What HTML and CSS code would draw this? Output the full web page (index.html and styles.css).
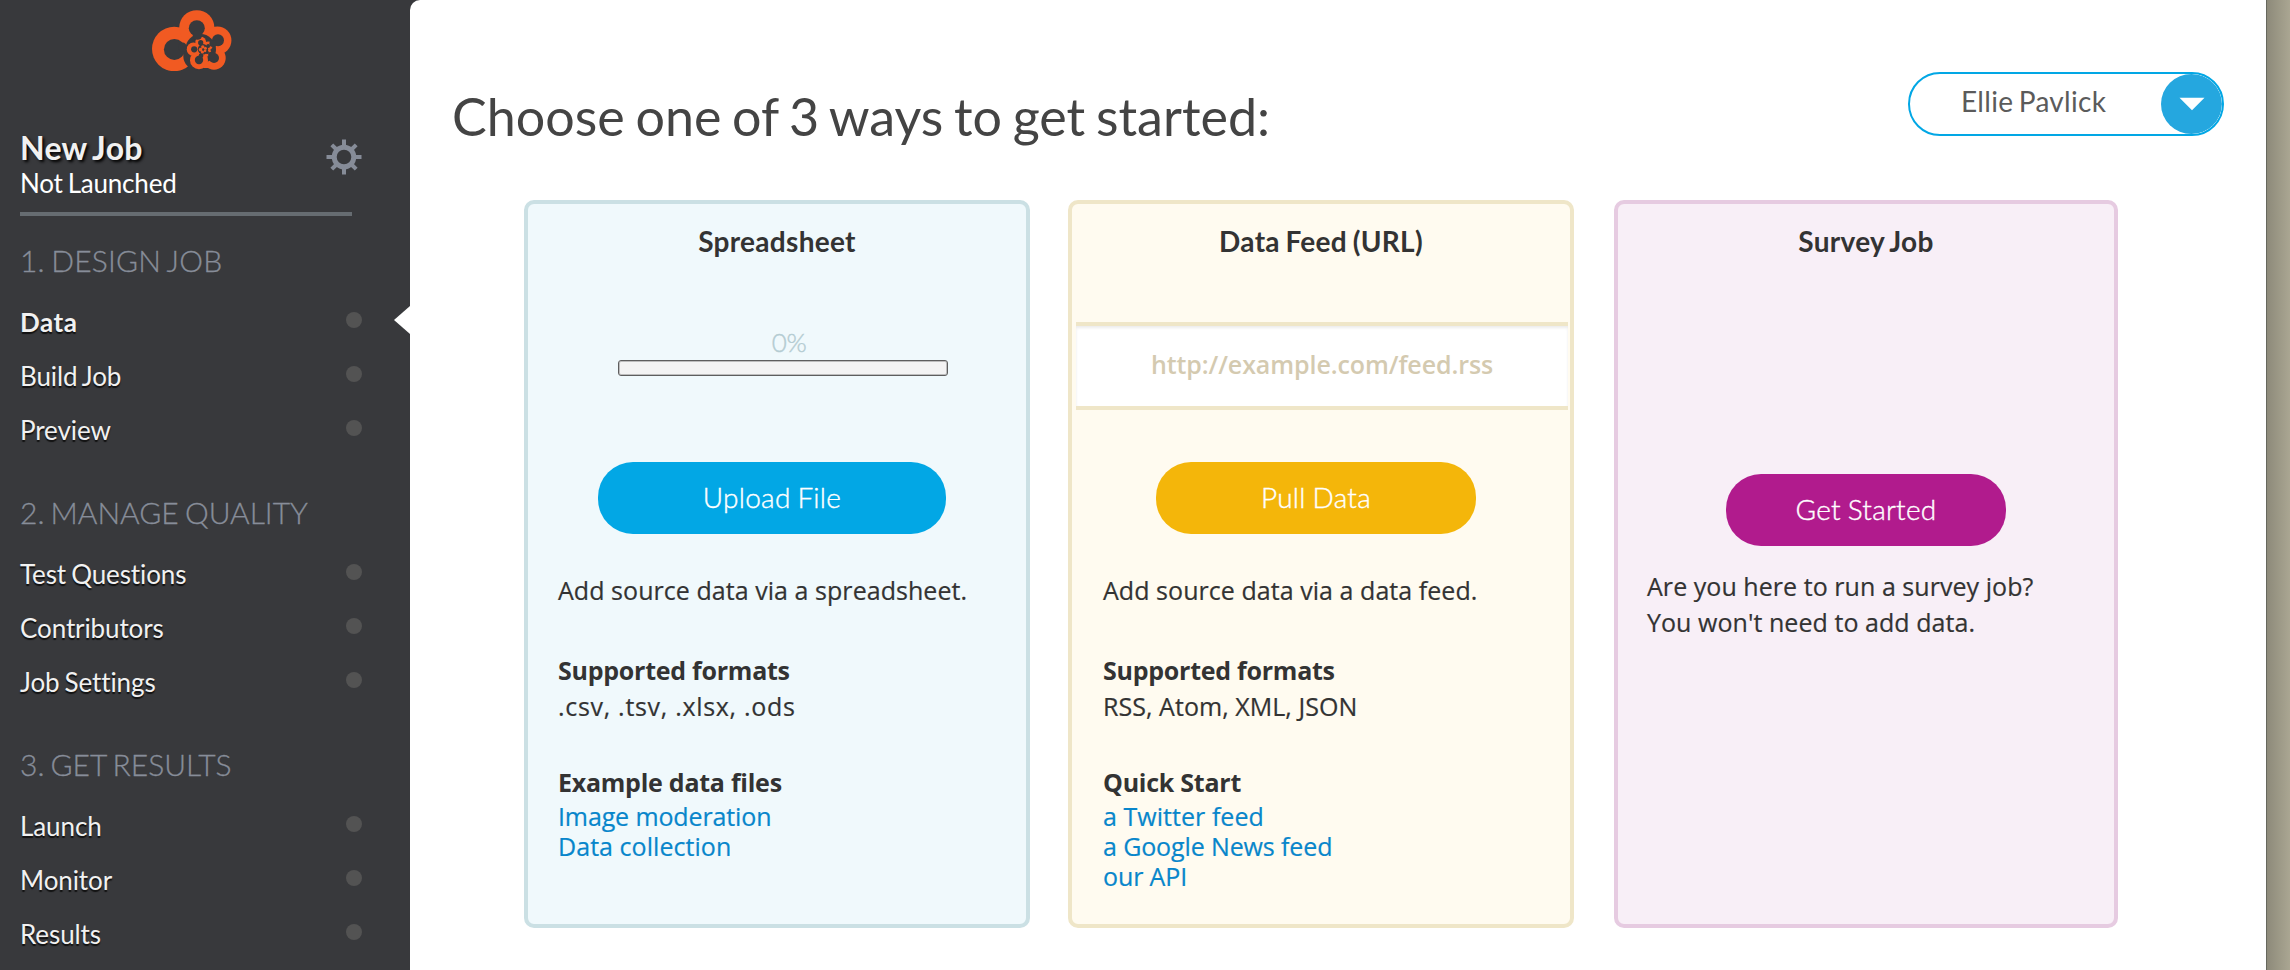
FILE: index.html
```html
<!DOCTYPE html>
<html lang="en">
<head>
<meta charset="utf-8">
<title>New Job</title>
<link rel="stylesheet" href="styles.css">
</head>
<body>
<div class="app">
  <aside class="sidebar">
    <svg class="logo" viewBox="0 0 82 64" aria-hidden="true">
      <g class="petal">
        <circle cx="23.2" cy="42" r="22.2"/><circle cx="45.8" cy="20.8" r="17.6"/><circle cx="66.4" cy="33.5" r="14"/><circle cx="50" cy="40" r="16"/>
      </g>
      <g class="gap">
        <circle cx="49.5" cy="42" r="15"/><circle cx="46.5" cy="49" r="14.2"/>
      </g>
      <circle class="petal" cx="63" cy="51" r="11.7"/>
      <circle class="gap" cx="52" cy="42.5" r="13"/>
      <g class="petal">
        <circle cx="48" cy="53.2" r="9"/><circle cx="42.4" cy="42.2" r="6.7"/><circle cx="49.7" cy="35" r="5.4"/><circle cx="57.2" cy="38.8" r="4.4"/><circle cx="56.4" cy="45.6" r="3.8"/><circle cx="51.5" cy="42" r="7"/>
        <path d="M52 61h8l-3-7z"/>
      </g>
      <g class="gap">
        <circle cx="23.4" cy="42.4" r="10.5"/><circle cx="31.5" cy="40" r="4.4"/>
        <circle cx="45.8" cy="21.2" r="8"/><circle cx="46.5" cy="28" r="4.8"/>
        <circle cx="67" cy="33.2" r="6"/><circle cx="62" cy="36.5" r="3.6"/>
        <circle cx="63" cy="51" r="5"/><circle cx="60.3" cy="48" r="3.2"/>
        <circle cx="48" cy="53" r="4.2"/><circle cx="50" cy="48.8" r="2.4"/>
        <circle cx="43.2" cy="42.3" r="3.1"/><circle cx="49.7" cy="35.7" r="2.6"/>
        <circle cx="57.2" cy="39" r="1.9"/><circle cx="56.2" cy="45.4" r="1.7"/>
        <circle cx="52" cy="42.2" r="5.2"/>
      </g>
      <g class="petal">
        <circle cx="49.7" cy="42.6" r="1.9"/><circle cx="51.8" cy="40" r="1.7"/><circle cx="54.4" cy="41.2" r="1.5"/><circle cx="54" cy="43.8" r="1.4"/><circle cx="51.4" cy="45" r="1.6"/>
      </g>
      <circle class="gap" cx="52.2" cy="42.5" r="1"/>
    </svg>
    <div class="job">
      <div>
        <div class="job-name">New Job</div>
        <div class="job-status">Not Launched</div>
      </div>
      <svg class="gear" viewBox="-18 -18 36 36" aria-hidden="true">
        <circle r="9.8" fill="none" stroke-width="5"/>
        <path d="M0-17.5V-11M0 17.5V11M-17.5 0H-11M17.5 0H11M-12.2-12.2-8-8M12.2 12.2 8 8M-12.2 12.2-8 8M12.2-12.2 8-8" stroke-width="4"/>
      </svg>
    </div>
    <h2 class="step">1. DESIGN JOB</h2>
    <ul class="nav">
      <li class="item active">Data<span class="dot"></span></li>
      <li class="item">Build Job<span class="dot"></span></li>
      <li class="item">Preview<span class="dot"></span></li>
    </ul>
    <h2 class="step step-2">2. MANAGE QUALITY</h2>
    <ul class="nav">
      <li class="item">Test Questions<span class="dot"></span></li>
      <li class="item">Contributors<span class="dot"></span></li>
      <li class="item">Job Settings<span class="dot"></span></li>
    </ul>
    <h2 class="step step-2">3. GET RESULTS</h2>
    <ul class="nav">
      <li class="item">Launch<span class="dot"></span></li>
      <li class="item">Monitor<span class="dot"></span></li>
      <li class="item">Results<span class="dot"></span></li>
    </ul>
  </aside>
  <main class="main">
    <header class="top">
      <h1 class="title">Choose one of 3 ways to get started:</h1>
      <div class="user">
        <span class="user-name">Ellie Pavlick</span>
        <span class="user-toggle"><svg class="arrow" viewBox="0 0 26 14" aria-hidden="true"><path d="M0.5 0.8H25.5L13 13.2z"/></svg></span>
      </div>
    </header>
    <div class="cards">
      <section class="card sheet">
        <h3 class="card-title">Spreadsheet</h3>
        <div class="slot">
          <div class="percent">0%</div>
          <div class="bar"></div>
        </div>
        <div class="btn">Upload File</div>
        <div class="info">
          <p class="line">Add source data via a spreadsheet.</p>
          <p class="line label gap-lg">Supported formats</p>
          <p class="line formats">.csv, .tsv, .xlsx, .ods</p>
          <p class="line label gap-md">Example data files</p>
          <div class="links"><a class="link snug">Image moderation</a><a class="link">Data collection</a></div>
        </div>
      </section>
      <section class="card feed">
        <h3 class="card-title">Data Feed (URL)</h3>
        <div class="slot">
          <div class="url">http://example.com/feed.rss</div>
        </div>
        <div class="btn">Pull Data</div>
        <div class="info">
          <p class="line">Add source data via a data feed.</p>
          <p class="line label gap-lg">Supported formats</p>
          <p class="line">RSS, Atom, XML, JSON</p>
          <p class="line label gap-md">Quick Start</p>
          <div class="links"><a class="link">a Twitter feed</a><a class="link snug">a Google News feed</a><a class="link snug">our API</a></div>
        </div>
      </section>
      <section class="card survey">
        <h3 class="card-title">Survey Job</h3>
        <div class="slot"></div>
        <div class="btn">Get Started</div>
        <div class="info">
          <p class="line">Are you here to run a survey job?</p>
          <p class="line">You won't need to add data.</p>
        </div>
      </section>
    </div>
  </main>
  <div class="edge"></div>
</div>
</body>
</html>
```
FILE: styles.css
```css
* { box-sizing: border-box; margin: 0; padding: 0; }
body { background: #38393c; font-family: Lato, sans-serif; overflow: hidden; }
.app { display: flex; height: 970px; width: 2290px; }

.sidebar { width: 410px; flex: none; padding: 7px 0 0 20px; color: #f1f1f1; }
.logo { display: block; width: 82px; height: 64px; margin-left: 131px; }
.petal { fill: #f15a22; }
.gap { fill: #38393c; }
.job { display: flex; justify-content: space-between; width: 342px; height: 145px; margin-bottom: 26px; padding-top: 58px; position: relative; }
.job::after { content: ""; position: absolute; left: 0; bottom: 0; width: 332px; height: 4px; background: #666c71; }
.job-name { font-size: 32px; font-weight: 700; line-height: 38px; letter-spacing: 0.3px; word-spacing: -2px; text-shadow: 2px 2px 3px #000; }
.job-status { font-size: 26px; font-weight: 400; line-height: 32px; letter-spacing: -0.2px; word-spacing: -1.5px; color: #fff; }
.gear { width: 36px; height: 36px; margin-top: 10px; fill: none; stroke: #868c98; }
.step { font-size: 30px; font-weight: 300; line-height: 36px; color: #878d99; margin-bottom: 17px; word-spacing: -2px; letter-spacing: 0.2px; -webkit-text-stroke: 0.3px #878d99; }
.step-2 { margin-top: 37px; letter-spacing: 0; }
.nav { list-style: none; }
.item { display: flex; align-items: center; justify-content: space-between; position: relative; width: 342px; height: 54px; line-height: 54px; font-size: 26px; word-spacing: -1.5px; letter-spacing: -0.1px; text-shadow: 0 2px 1px #111; }
.active { font-weight: 700; letter-spacing: 0.5px; }
.active::after { content: ""; position: absolute; left: 374px; top: 11px; border: solid transparent; border-width: 14px 16px 14px 0; border-right-color: #fff; }
.dot { width: 16px; height: 16px; border-radius: 50%; background: #535353; margin-bottom: 4px; }

.main { width: 1856px; flex: none; background: #fff; border-top-left-radius: 10px; padding-top: 72px; }
.edge { flex: 1; border-left: 1px solid #66675d; background: linear-gradient(to right, #8d8a7a, #aaa692); }
.top { display: flex; justify-content: space-between; height: 128px; padding: 0 42px 0 42px; }
.title { font-size: 52px; font-weight: 400; line-height: 62px; letter-spacing: 0.02px; word-spacing: -2.7px; color: #444; margin-top: 13px; }
.user { display: flex; justify-content: space-between; width: 316px; height: 64px; border: 2px solid #02a7e5; border-radius: 32px; padding-left: 51px; overflow: hidden; }
.user-name { font-size: 28px; line-height: 34px; letter-spacing: 0.3px; word-spacing: -2px; color: #5b5b5b; padding-top: 10px; }
.user-toggle { display: flex; align-items: center; justify-content: center; width: 61px; height: 60px; border-radius: 50%; background: #25a7df; }
.arrow { width: 26px; height: 14px; fill: #fff; }

.cards { display: grid; grid-template-columns: 506px 506px 504px; column-gap: 38px; height: 728px; padding-left: 114px; }
.card { border: 4px solid; border-radius: 10px; padding-top: 20px; color: #333; }
.sheet { background: #f0f9fc; border-color: #cbe0e4; }
.feed { background: #fffbf0; border-color: #efe6c8; }
.survey { background: #f8eff7; border-color: #e6cbe1; margin-left: 2px; width: 504px; }
.card-title { font-size: 28px; font-weight: 700; line-height: 34px; letter-spacing: 0.3px; word-spacing: -1.5px; text-align: center; }
.slot { height: 204px; }
.sheet .slot { padding-top: 68px; }
.feed .slot { padding-top: 64px; }
.survey .slot { height: 216px; }
.percent { width: 330px; margin-left: 96px; text-align: center; font-size: 26px; font-weight: 300; line-height: 32px; letter-spacing: -0.5px; color: #b4ccd2; -webkit-text-stroke: 0.4px #b4ccd2; }
.bar { width: 330px; height: 16px; margin: 2px 0 0 90px; border: 1px solid #5e5e5e; border-radius: 3px; background: #f3f3f3; box-shadow: inset 0 0 0 1px #bdbdbd; }
.url { width: 492px; height: 88px; margin-left: 4px; border: solid #efe6c8; border-width: 4px 0; background: #fff; box-shadow: inset 0 2px 3px rgba(0, 0, 0, 0.08); text-align: center; font: 600 25px/77px "Open Sans", sans-serif; letter-spacing: -0.09px; color: #d4cab0; }
.btn { height: 72px; border-radius: 35px; font-size: 28px; font-weight: 300; line-height: 71px; letter-spacing: 0.25px; word-spacing: -1px; text-align: center; color: #fff; -webkit-text-stroke: 0.4px #fff; }
.sheet .btn { width: 348px; margin-left: 70px; background: #02a7e5; }
.feed .btn { width: 320px; margin-left: 84px; background: #f4b60a; }
.survey .btn { width: 280px; margin-left: 108px; background: #b11b8d; }
.info { padding: 38px 0 0 30px; font: 400 25px/36px "Open Sans", sans-serif; letter-spacing: 0.05px; -webkit-text-stroke-width: 0.2px; }
.feed .info { padding-left: 31px; }
.survey .info { padding: 22px 0 0 29px; }
.label { font-weight: 700; letter-spacing: -0.25px; -webkit-text-stroke-width: 0; }
.formats { letter-spacing: 0.7px; }
.gap-lg { margin-top: 44px; }
.gap-md { margin-top: 40px; }
.links { display: flex; flex-direction: column; line-height: 30px; padding-top: 1px; }
.link { color: #0886cb; }
.snug { letter-spacing: -0.12px; }
```
